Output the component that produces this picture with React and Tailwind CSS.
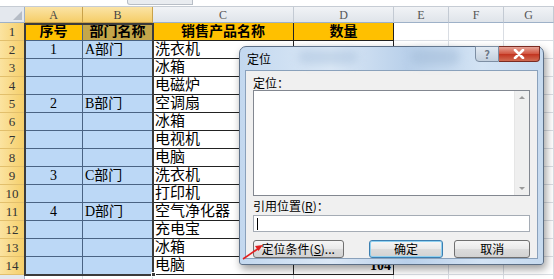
import React from "react";

const font = "font-['Liberation_Serif','Noto_Sans_CJK_SC',serif]";
const ui = "font-['Noto_Sans_CJK_SC','Liberation_Sans',sans-serif]";

const data = [
  ["1", "A部门", "洗衣机"],
  ["", "", "冰箱"],
  ["", "", "电磁炉"],
  ["2", "B部门", "空调扇"],
  ["", "", "冰箱"],
  ["", "", "电视机"],
  ["", "", "电脑"],
  ["3", "C部门", "洗衣机"],
  ["", "", "打印机"],
  ["4", "D部门", "空气净化器"],
  ["", "", "充电宝"],
  ["", "", "冰箱"],
  ["", "", "电脑"],
];

const colHead = "flex items-center justify-center border-r border-b text-[12px] leading-none";

const RowHead = ({ n, selected = true }) => (
  <div
    className={`flex items-center justify-center border-r border-b text-[13px] text-[#333] ${
      selected
        ? "bg-[linear-gradient(to_right,#fbe3a0,#f6cf6a)] border-r-[#c9a24a] border-b-[#e2bf6c]"
        : "bg-[#e4e8ee] border-r-[#9eb1c8] border-b-[#cfd6df]"
    }`}
  >
    {n}
  </div>
);

const blank = "border-r border-b border-[#d9dde3] bg-white";

const Sheet = () => (
  <div className={`w-full ${font}`}>
    <div className="relative h-[7px] border-b border-[#c6ccd4] bg-white">
      <div className="absolute left-[127px] top-0 h-[5px] w-[66px] rounded-bl-[3px] border-b border-l border-r border-[#b8bec6] bg-[#e9ecf0]" />
    </div>
    <div className="grid grid-cols-[25px_58px_70px_141px_100px_55px_55px_1fr] auto-rows-[18px] [grid-template-rows:16px]">
      {/* column headers */}
      <div className="relative border-r border-b border-[#9eb1c8] bg-[#e4e8ee]">
        <div className="absolute bottom-[2px] right-[2px] h-0 w-0 border-b-[9px] border-l-[9px] border-b-[#b5bcc6] border-l-transparent" />
      </div>
      <div className={`${colHead} border-r-[#c9a24a] border-b-[#c9a24a] bg-[linear-gradient(to_bottom,#fbe4a6,#f5cd68)] text-[#444]`}>A</div>
      <div className={`${colHead} border-r-[#c9a24a] border-b-[#c9a24a] bg-[linear-gradient(to_bottom,#fbe4a6,#f5cd68)] text-[#444]`}>B</div>
      {["C", "D", "E", "F", "G"].map((c) => (
        <div key={c} className={`${colHead} border-r-[#c3cad3] border-b-[#9eb1c8] bg-[linear-gradient(to_bottom,#f1f3f6,#dfe4ea)] text-[#555]`}>
          {c}
        </div>
      ))}

      {/* row 1 */}
      <RowHead n="1" />
      <div className="flex items-center justify-center border-r border-b border-[#4a6383] bg-[#ffc000] text-[14px] font-bold">序号</div>
      <div className="flex items-center justify-center border-r border-b border-[#4a6383] bg-[#c4a74a] text-[14px] font-bold">部门名称</div>
      <div className="flex items-center justify-center border-r border-b border-[#222] bg-[#ffc000] text-[14px] font-bold">销售产品名称</div>
      <div className="flex items-center justify-center border-r border-b border-[#222] bg-[#ffc000] text-[14px] font-bold">数量</div>
      <div className={blank} />
      <div className={blank} />
      <div className={blank} />

      {data.map((r, i) => (
        <React.Fragment key={i}>
          <RowHead n={i + 2} />
          <div className="flex items-center justify-center border-r border-b border-[#4a6383] bg-[#bcd8f6] text-[14px]">{r[0]}</div>
          <div className="flex items-center border-r border-b border-[#4a6383] bg-[#bcd8f6] pl-[2px] text-[14px]">{r[1]}</div>
          <div className="flex items-center overflow-hidden whitespace-nowrap border-r border-b border-[#222] bg-white pl-[2px] text-[15px]">{r[2]}</div>
          <div className="flex items-center justify-end border-r border-b border-[#222] bg-white pr-[2px] text-[14px] font-bold">
            {i === 12 ? "104" : ""}
          </div>
          <div className={blank} />
          <div className={blank} />
          <div className={blank} />
        </React.Fragment>
      ))}

      <RowHead n="" selected={false} />
      <div className={blank} />
      <div className={blank} />
      <div className={blank} />
      <div className={blank} />
      <div className={blank} />
      <div className={blank} />
      <div className={blank} />
    </div>
  </div>
);

const Btn = ({ children, className = "" }) => (
  <button
    className={`flex h-[18px] items-center justify-center rounded-[3px] border bg-[linear-gradient(to_bottom,#f6f6f6,#e9e9e9_50%,#dcdcdc_51%,#d2d2d2)] text-[12px] text-black ${className}`}
  >
    {children}
  </button>
);

const Dialog = () => (
  <div className={`absolute left-[239px] top-[46px] flex h-[219px] w-[305px] flex-col rounded-t-[7px] rounded-b-[3px] border border-[#5c6f86] bg-[linear-gradient(to_right,#c3d8ef,#dbe8f6_30%,#b9d0ea_55%,#d3e3f4_80%,#c6daef)] shadow-[2px_4px_8px_rgba(0,0,0,0.4)] ${ui}`}>
    <div className="relative flex h-[23px] shrink-0 items-center pl-[7px] text-[12px] text-black">
      定位
      <div className="absolute left-[58px] top-[3px] h-[14px] w-[60px] rounded-full bg-[#a9c1dc] opacity-50 blur-[4px]" />
      <div className="absolute left-[170px] top-[2px] h-[16px] w-[50px] rounded-full bg-[#9fb9d6] opacity-50 blur-[4px]" />
      <div className="absolute right-[3px] top-[-1px] flex">
        <div className="flex h-[16px] w-[24px] items-center justify-center rounded-bl-[4px] border border-[#7d8ea3] bg-[linear-gradient(to_bottom,#e2eaf3,#c3d0de)] text-[11px] font-bold text-[#6b7786]">
          ?
        </div>
        <div className="flex h-[16px] w-[41px] items-center justify-center rounded-br-[4px] border border-l-0 border-[#7a2b22] bg-[linear-gradient(to_bottom,#e6a396,#d1543f_50%,#c2331f_51%,#d06b52)]">
          <svg width="12" height="10" viewBox="0 0 12 10">
            <path d="M2 1 L10 9 M10 1 L2 9" stroke="#fff" strokeWidth="2.6" strokeLinecap="round" />
          </svg>
        </div>
      </div>
    </div>
    <div className="mx-[5px] mb-[5px] flex flex-1 flex-col border border-[#8aa1bb] bg-[#f0f0f0] px-[7px] text-[12px]">
      <div className="mt-[5px] leading-[13px]">定位：</div>
      <div className="mt-[1px] flex h-[106px] border border-[#828790] bg-white">
        <div className="flex-1" />
        <div className="flex w-[15px] flex-col items-center justify-between border-l border-[#e6e6e6] bg-[#efefef] py-[5px]">
          <div className="h-0 w-0 border-b-[3px] border-l-[3px] border-r-[3px] border-b-[#9a9a9a] border-l-transparent border-r-transparent" />
          <div className="h-0 w-0 border-l-[3px] border-r-[3px] border-t-[3px] border-t-[#9a9a9a] border-l-transparent border-r-transparent" />
        </div>
      </div>
      <div className="mt-[3px] leading-[13px]">
        引用位置(<span className="underline">R</span>)：
      </div>
      <div className="mt-[3px] flex h-[17px] items-center border border-[#a5acb5] bg-white pl-[3px]">
        <div className="h-[12px] w-px bg-black" />
      </div>
      <div className="mt-[8px] flex">
        <Btn className="w-[92px] border-[#707070]">
          定位条件(<span className="underline">S</span>)...
        </Btn>
        <Btn className="ml-[25px] w-[76px] border-[#3c7fb1] shadow-[inset_0_0_0_1px_#8fd0f0]">确定</Btn>
        <Btn className="ml-[11px] w-[77px] border-[#707070]">取消</Btn>
      </div>
    </div>
  </div>
);

export default function App() {
  return (
    <div className="relative h-[279px] w-[554px] overflow-hidden bg-white">
      <Sheet />
      {/* selection frame A1:B14 */}
      <div className="pointer-events-none absolute left-[24px] top-[23px] h-[253px] w-[130px] border-2 border-[#3b3b3b]" />
      <div className="pointer-events-none absolute left-[151px] top-[272px] h-[5px] w-[5px] border border-white bg-[#3b3b3b]" />
      <Dialog />
      <svg className="pointer-events-none absolute left-0 top-0" width="554" height="279">
        <line x1="243" y1="259" x2="259" y2="248" stroke="#e02020" strokeWidth="1.6" />
        <path d="M263 245 L255 246 L258.5 251 Z" fill="#e02020" />
      </svg>
    </div>
  );
}
